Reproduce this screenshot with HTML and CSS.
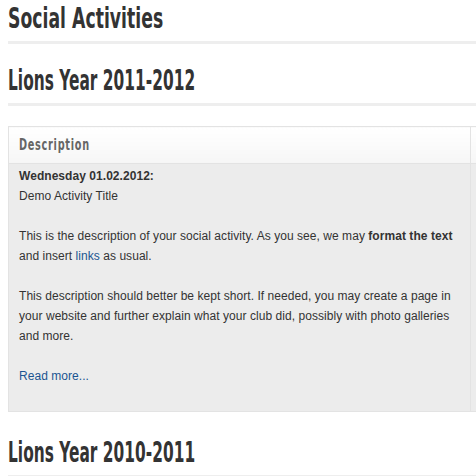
FILE: index.html
```html
<!DOCTYPE html>
<html lang="en">
<head>
<meta charset="UTF-8">
<title>Social Activities</title>
<link rel="stylesheet" href="styles.css">
</head>
<body>

<div id="page">

<h1><span class="narrow">Social Activities</span></h1>

<h2><span class="narrow">Lions Year 2011-2012</span></h2>

<table class="activities">
  <thead>
    <tr>
      <th class="desc"><span class="narrow">Description</span></th>
      <th></th>
    </tr>
  </thead>
  <tbody>
    <tr>
      <td class="desc">
        <strong>Wednesday 01.02.2012:</strong><br>
        Demo Activity Title<br>
        <br>
        This is the description of your social activity. As you see, we may <strong>format the text</strong> and insert <a href="#">links</a> as usual.<br>
        <br>
        This description should better be kept short. If needed, you may create a page in your website and further explain what your club did, possibly with photo galleries and more.<br>
        <br>
        <a href="#">Read more...</a>
      </td>
      <td></td>
    </tr>
  </tbody>
</table>

<h2><span class="narrow">Lions Year 2010-2011</span></h2>

</div>

</body>
</html>
```

FILE: styles.css
```css
html, body {
  overflow: hidden;
}

body {
  margin: 0;
  padding: 0 0 0 8px;
  background: #fff;
  font-family: 'Liberation Sans', Arial, sans-serif;
  font-size: 12px;
  line-height: 20px;
  letter-spacing: 0.05px;
  color: #333;
}

#page {
  width: 640px;
}

/* no condensed webfont offline, so squeeze the condensed fallback */
.narrow {
  display: inline-block;
  transform: scaleX(0.66);
  transform-origin: left center;
  white-space: nowrap;
}

h1, h2 {
  font-family: 'DejaVu Sans Condensed', 'DejaVu Sans', sans-serif;
  font-weight: bold;
  font-size: 29px;
  line-height: 36px;
  color: #333;
  margin: 0;
  padding: 0 0 5px;
  border-bottom: 3px solid #eee;
}

h2 {
  margin-top: 18px;
}

h2 .narrow {
  transform: scaleX(0.59);
}

.activities {
  border-collapse: collapse;
  width: 100%;
  margin: 20px 0 22px;
}

.activities th {
  font-family: 'DejaVu Sans Condensed', 'DejaVu Sans', sans-serif;
  font-weight: bold;
  font-size: 15px;
  letter-spacing: 1px;
  color: #666;
  text-align: left;
  height: 36px;
  padding: 0 10px;
  background: linear-gradient(#fff, #f6f6f6);
  border: 1px solid #e3e3e3;
}

.activities th .narrow {
  transform: scaleX(0.72);
}

.activities td {
  vertical-align: top;
  background: #ececec;
  padding: 2px 10px 25px;
  border: 1px solid #e3e3e3;
  border-top: 0;
}

.activities .desc {
  width: 441px;
}

a {
  color: #1a5491;
  text-decoration: none;
}
```
